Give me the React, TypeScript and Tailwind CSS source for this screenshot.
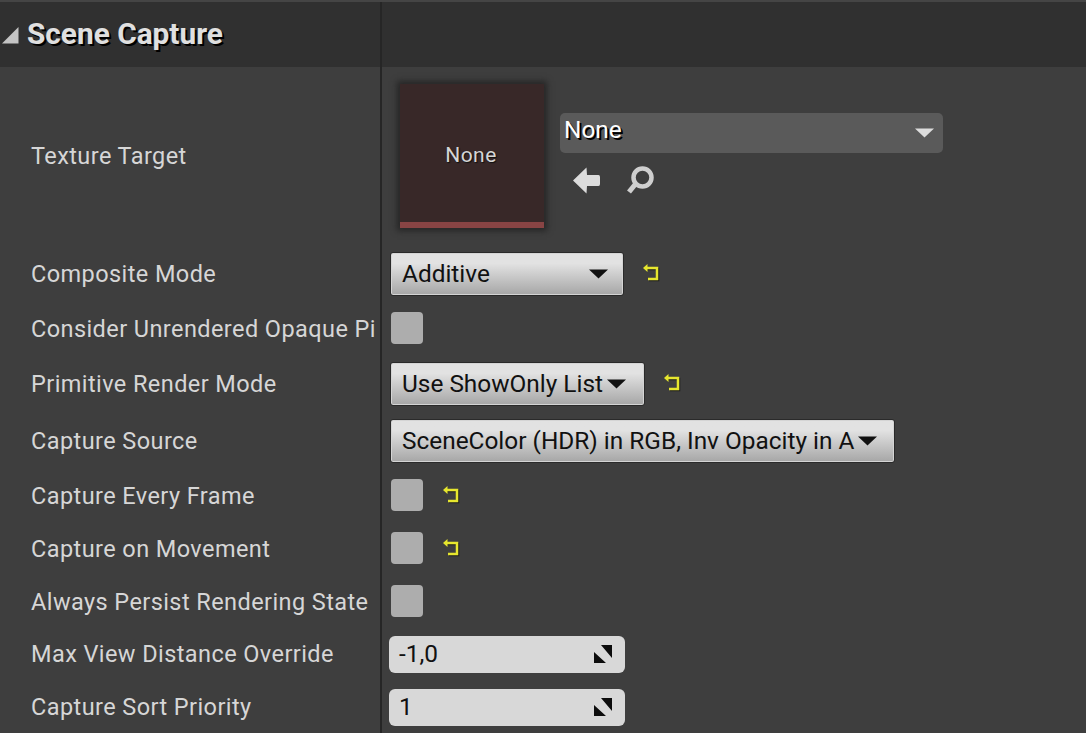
const rows = [
  { label: "Composite Mode", h: "h-[60px]" },
  { label: "Consider Unrendered Opaque Pi", h: "h-[50px]" },
  { label: "Primitive Render Mode", h: "h-[60px]" },
  { label: "Capture Source", h: "h-[54px]" },
  { label: "Capture Every Frame", h: "h-[56px]" },
  { label: "Capture on Movement", h: "h-[50px]" },
  { label: "Always Persist Rendering State", h: "h-[56px]" },
  { label: "Max View Distance Override", h: "h-[48px]" },
  { label: "Capture Sort Priority", h: "h-[58px]" },
];

function ResetIcon() {
  return (
    <svg width="18" height="20" viewBox="0 0 18 20" className="shrink-0">
      <path d="M3 5H14V16H5" fill="none" stroke="#1c1c1c" strokeWidth="2.5" transform="translate(1 1)" />
      <path d="M3 5H14V16H5" fill="none" stroke="#e6e62e" strokeWidth="2.5" />
      <path d="M4.5 1V9L0 5Z" fill="#e6e62e" />
    </svg>
  );
}

function Caret({ color = "#111111" }: { color?: string }) {
  return (
    <svg width="19" height="10" viewBox="0 0 19 10" className="shrink-0">
      <path d="M0 0.5H19L9.5 9.5Z" fill={color} />
    </svg>
  );
}

function Combo({ text, width, gap }: { text: string; width: string; gap: string }) {
  return (
    <div className={`mt-[2px] flex h-[44px] ${width} items-center rounded-[3px] border border-[#2a2a2a] bg-gradient-to-b from-[#e2e2e2] from-25% to-[#a6a6a6] pl-[11px] text-[24.4px] tracking-normal text-[#111111] shadow-[inset_0_0_0_1px_#d4d4d4]`}>
      <span className="whitespace-nowrap">{text}</span>
      <span className={gap}>
        <Caret />
      </span>
    </div>
  );
}

function Checkbox() {
  return <div className="ml-px h-[32px] w-[32px] rounded-[4px] bg-[#adadad]" />;
}

function NumberBox({ value }: { value: string }) {
  return (
    <div className="mt-[2px] flex h-[37px] w-[236px] items-center justify-between rounded-[6px] bg-[#d8d8d8] pl-[10px] pr-[13px] text-[24.4px] tracking-normal text-[#111111]">
      <span className="pt-px">{value}</span>
      <svg width="18" height="18" viewBox="0 0 18 18">
        <path d="M7 0H18V13Z M0 7L12 18H0Z" fill="#0c0c0c" />
      </svg>
    </div>
  );
}

function RowValue({ index }: { index: number }) {
  if (index === 0) {
    return (
      <div className="flex items-center gap-[19px]">
        <Combo text="Additive" width="w-[234px]" gap="ml-[99px]" />
        <ResetIcon />
      </div>
    );
  }
  if (index === 2) {
    return (
      <div className="flex items-center gap-[19px]">
        <Combo text="Use ShowOnly List" width="w-[255px]" gap="ml-[4px]" />
        <ResetIcon />
      </div>
    );
  }
  if (index === 3) {
    return <Combo text="SceneColor (HDR) in RGB, Inv Opacity in A" width="w-[505px]" gap="ml-[4px]" />;
  }
  if (index === 4 || index === 5) {
    return (
      <div className="flex items-center gap-[20px]">
        <Checkbox />
        <ResetIcon />
      </div>
    );
  }
  if (index === 1 || index === 6) return <Checkbox />;
  return <NumberBox value={index === 7 ? "-1,0" : "1"} />;
}

export default function App() {
  return (
    <div className="h-[733px] w-[1086px] overflow-hidden bg-[#3e3e3e] font-['Roboto',sans-serif] text-[23.5px] tracking-[0.42px] text-[#d6d6d6]">
      <div className="h-[2px] bg-[#454545]" />
      <div className="flex h-[65px] bg-[#303030]">
        <div className="flex w-[382px] items-center border-r-2 border-[#262626] pl-[2px]">
          <svg width="17" height="17" viewBox="0 0 17 17" className="mt-[2px]">
            <path d="M0 16.5H16.5V0Z" fill="#c4c4c4" />
          </svg>
          <span className="ml-[8px] text-[29.8px] font-bold tracking-normal text-[#e0e0e0] [text-shadow:2px_2px_0_#000]">Scene Capture</span>
        </div>
      </div>

      <div className="grid h-[176px] grid-cols-[382px_1fr]">
        <div className="flex items-center border-r-2 border-[#262626] pl-[31px] pt-[4px]">Texture Target</div>
        <div className="flex pl-[18px] pt-[17px]">
          <div className="flex h-[144px] w-[144px] flex-col bg-[#382828] shadow-[0_0_6px_3px_#262626]">
            <div className="flex flex-1 items-center justify-center pr-[2px] pt-[6px] text-[21px] [text-shadow:1px_1px_1px_#111]">None</div>
            <div className="h-[6px] bg-[#884444]" />
          </div>
          <div className="ml-[16px] pt-[29px]">
            <div className="flex h-[40px] w-[383px] items-center justify-between rounded-[5px] bg-[#5a5a5a] pl-[4px] pr-[9px]">
              <span className="pb-[5px] text-[24.4px] tracking-normal text-white [text-shadow:2px_2px_0_#000]">None</span>
              <Caret color="#dddddd" />
            </div>
            <div className="ml-[13px] mt-[13px] flex items-center gap-[26px]">
              <svg width="27" height="27" viewBox="0 0 27 27">
                <path d="M0 13.5L13.5 0.5L14 8H25.5Q27 8 27 10V17Q27 19 25.5 19H14L13.5 26.5Z" fill="#dcdcdc" />
              </svg>
              <svg width="28" height="28" viewBox="0 0 28 28">
                <circle cx="16.5" cy="11.5" r="9" fill="none" stroke="#cfcfcf" strokeWidth="4.5" />
                <path d="M9.5 18L3 26" stroke="#cfcfcf" strokeWidth="5" />
              </svg>
            </div>
          </div>
        </div>
      </div>

      {rows.map((row, index) => (
        <div key={row.label} className={`grid ${row.h} grid-cols-[382px_1fr]`}>
          <div className="flex items-center overflow-hidden whitespace-nowrap border-r-2 border-[#262626] pl-[31px] pt-[4px]">
            {row.label}
          </div>
          <div className={`flex items-center ${index >= 7 ? "pl-[7px]" : "pl-[8px]"}`}>
            <RowValue index={index} />
          </div>
        </div>
      ))}
    </div>
  );
}
